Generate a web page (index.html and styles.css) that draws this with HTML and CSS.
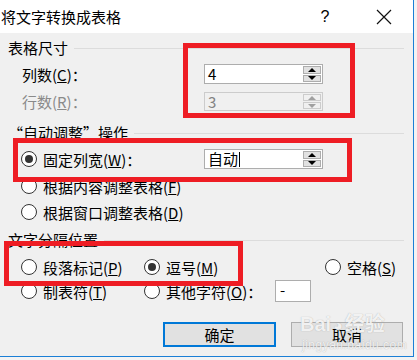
FILE: index.html
```html
<!DOCTYPE html>
<html lang="zh-CN">
<head>
    <meta charset="UTF-8">
    <title>将文字转换成表格</title>
    <link rel="stylesheet" href="styles.css">
</head>
<body>
    <div class="dialog">
        <div class="titlebar">
            <span class="title">将文字转换成表格</span>
            <span class="help">?</span>
            <span class="close">
                <svg width="16" height="16" viewBox="0 0 16 16"><path d="M1 1 L15 15 M15 1 L1 15" stroke="#111" stroke-width="1.2" fill="none"/></svg>
            </span>
        </div>

        <div class="content">
            <!-- 表格尺寸 -->
            <div class="legend legend-1"><span>表格尺寸</span><i class="rule"></i></div>
            <div class="row row-cols">
                <span class="label">列数(<u>C</u>)：</span>
                <div class="spin">
                    <span class="spin-value">4</span>
                    <div class="spin-btns">
                        <span class="spin-btn"><i class="tri up"></i></span>
                        <span class="spin-btn"><i class="tri down"></i></span>
                    </div>
                </div>
            </div>
            <div class="row row-rows disabled">
                <span class="label">行数(<u>R</u>)：</span>
                <div class="spin">
                    <span class="spin-value">3</span>
                    <div class="spin-btns">
                        <span class="spin-btn"><i class="tri up"></i></span>
                        <span class="spin-btn"><i class="tri down"></i></span>
                    </div>
                </div>
            </div>

            <!-- 自动调整 -->
            <div class="legend legend-2"><span>“自动调整”操作</span><i class="rule"></i></div>
            <div class="row row-fixed">
                <span class="radio checked"></span>
                <span class="label">固定列宽(<u>W</u>)：</span>
                <div class="spin">
                    <span class="spin-value">自动<i class="caret"></i></span>
                    <div class="spin-btns">
                        <span class="spin-btn"><i class="tri up"></i></span>
                        <span class="spin-btn"><i class="tri down"></i></span>
                    </div>
                </div>
            </div>
            <div class="row row-radio">
                <span class="radio"></span>
                <span class="label">根据内容调整表格(<u>F</u>)</span>
            </div>
            <div class="row row-radio">
                <span class="radio"></span>
                <span class="label">根据窗口调整表格(<u>D</u>)</span>
            </div>

            <!-- 文字分隔位置 -->
            <div class="legend legend-3"><span>文字分隔位置</span><i class="rule"></i></div>
            <div class="row row-sep">
                <div class="opt opt-a"><span class="radio"></span><span class="label">段落标记(<u>P</u>)</span></div>
                <div class="opt opt-b"><span class="radio checked"></span><span class="label">逗号(<u>M</u>)</span></div>
                <div class="opt opt-c"><span class="radio"></span><span class="label">空格(<u>S</u>)</span></div>
            </div>
            <div class="row row-sep2">
                <div class="opt opt-a"><span class="radio"></span><span class="label">制表符(<u>T</u>)</span></div>
                <div class="opt opt-b"><span class="radio"></span><span class="label">其他字符(<u>O</u>)：</span></div>
                <span class="small-input">-</span>
            </div>

            <div class="buttons">
                <span class="btn btn-default">确定</span>
                <span class="btn">取消</span>
            </div>
        </div>

        <!-- 标注框 -->
        <div class="mark mark-1"></div>
        <div class="mark mark-2"></div>
        <div class="mark mark-3"></div>

        <div class="watermark">
            <div class="wm-logo">Bai<span class="paw">◕</span>经验</div>
            <div class="wm-url">jingyan.baidu.com</div>
        </div>
    </div>
</body>
</html>
```

FILE: styles.css
```css
* {
    margin: 0;
    padding: 0;
    box-sizing: border-box;
}

body {
    background-color: #f3f3f3;
    font-family: 'Noto Sans CJK SC', 'DejaVu Sans', sans-serif;
    font-size: 15px;
    color: #000;
    overflow: hidden;
}

.dialog {
    position: relative;
    width: 414px;
    height: 357px;
    background-color: #f0f0f0;
    border-right: 1px solid #1b7fd6;
    border-bottom: 1px solid #1b7fd6;
}

.titlebar {
    height: 33px;
    background-color: #fff;
    display: flex;
    align-items: center;
}

.title {
    font-size: 15px;
    padding-left: 1px;
    flex: 1;
}

.help {
    font-family: 'Liberation Sans', sans-serif;
    font-size: 16px;
    width: 20px;
    text-align: center;
    margin-right: 41px;
}

.close {
    display: flex;
    width: 16px;
    margin-right: 21px;
}

.content {
    padding-left: 8px;
}

.legend {
    display: flex;
    align-items: center;
    height: 20px;
    line-height: 20px;
}

.legend .rule {
    flex: 1;
    height: 1px;
    background-color: #dcdcdc;
    margin-left: 6px;
    margin-right: 9px;
}

.legend-1 {
    margin-top: 5px;
}

.legend-2 {
    margin-top: 12px;
}

.legend-3 {
    margin-top: 8px;
}

.row {
    display: flex;
    align-items: center;
    height: 20px;
}

.row .label {
    white-space: nowrap;
}

.row-cols {
    margin-top: 6px;
    padding-left: 14px;
}

.row-rows {
    margin-top: 8px;
    padding-left: 14px;
    height: 19px;
}

.row-cols .label,
.row-rows .label {
    width: 182px;
}

.disabled .label {
    color: #8a8a8a;
}

.row-fixed {
    margin-top: 6px;
    padding-left: 13px;
}

.row-fixed .label {
    width: 161px;
}

.row-radio {
    margin-top: 7px;
    padding-left: 13px;
}

.row-radio + .row-radio {
    margin-top: 6px;
}

.radio {
    width: 16px;
    height: 16px;
    border: 1px solid #333;
    border-radius: 50%;
    background-color: #fff;
    margin-right: 6px;
    display: flex;
    align-items: center;
    justify-content: center;
    flex-shrink: 0;
}

.radio.checked::after {
    content: '';
    width: 8px;
    height: 8px;
    border-radius: 50%;
    background-color: #333;
}

/* spin box */
.spin {
    width: 119px;
    height: 100%;
    border: 1px solid #adadad;
    background-color: #fff;
    display: flex;
}

.spin-value {
    flex: 1;
    padding-left: 3px;
    line-height: 18px;
    display: flex;
    align-items: center;
}

.caret {
    display: inline-block;
    width: 1px;
    height: 15px;
    background-color: #000;
    margin-left: 1px;
}

.spin-btns {
    width: 19px;
    display: flex;
    flex-direction: column;
    gap: 1px;
    padding: 1px 1px 1px 0;
}

.spin-btn {
    flex: 1;
    background-color: #e1e1e1;
    border: 1px solid #adadad;
    display: flex;
    align-items: center;
    justify-content: center;
}

.tri {
    width: 0;
    height: 0;
    border-left: 4px solid transparent;
    border-right: 4px solid transparent;
}

.tri.up {
    border-bottom: 4px solid #000;
}

.tri.down {
    border-top: 4px solid #000;
}

.disabled .spin {
    border-color: #cccccc;
    background-color: #f0f0f0;
}

.disabled .spin-value {
    color: #838383;
}

.disabled .spin-btn {
    background-color: #f0f0f0;
    border-color: #cccccc;
}

.disabled .tri.up {
    border-bottom-color: #a0a0a0;
}

.disabled .tri.down {
    border-top-color: #a0a0a0;
}

/* separator options */
.row-sep {
    margin-top: 7px;
    padding-left: 13px;
}

.row-sep2 {
    margin-top: 3px;
    padding-left: 13px;
    height: 22px;
}

.opt {
    display: flex;
    align-items: center;
}

.opt-a {
    width: 123px;
}

.opt-b {
    width: 131px;
}

.opt-c {
    margin-left: 50px;
}

.row-sep2 .opt-b {
    width: 131px;
}

.small-input {
    width: 36px;
    height: 22px;
    border: 1px solid #adadad;
    background-color: #fff;
    padding-left: 4px;
    line-height: 18px;
}

.buttons {
    display: flex;
    gap: 15px;
    padding-left: 155px;
    margin-top: 20px;
}

.btn {
    width: 112px;
    height: 25px;
    background-color: #e1e1e1;
    border: 1px solid #adadad;
    display: flex;
    align-items: center;
    justify-content: center;
}

.btn-default {
    width: 113px;
    border: 2px solid #0078d7;
}

/* red annotation boxes */
.mark {
    position: absolute;
    border: 5px solid #ee1d24;
}

.mark-1 {
    left: 183px;
    top: 43px;
    width: 172px;
    height: 75px;
}

.mark-2 {
    left: 13px;
    top: 138px;
    width: 339px;
    height: 44px;
}

.mark-3 {
    left: 4px;
    top: 241px;
    width: 239px;
    height: 45px;
}

.watermark {
    position: absolute;
    left: 300px;
    top: 312px;
    color: rgba(255, 255, 255, 0.85);
    text-shadow: 0 0 1px rgba(120, 120, 120, 0.6);
    font-family: 'Liberation Sans', 'Noto Sans CJK SC', sans-serif;
}

.wm-logo {
    font-size: 20px;
    font-weight: bold;
    line-height: 24px;
}

.paw {
    font-size: 16px;
    margin: 0 2px;
}

.wm-url {
    font-size: 12px;
    line-height: 14px;
    padding-left: 2px;
    letter-spacing: 0.5px;
}
```
